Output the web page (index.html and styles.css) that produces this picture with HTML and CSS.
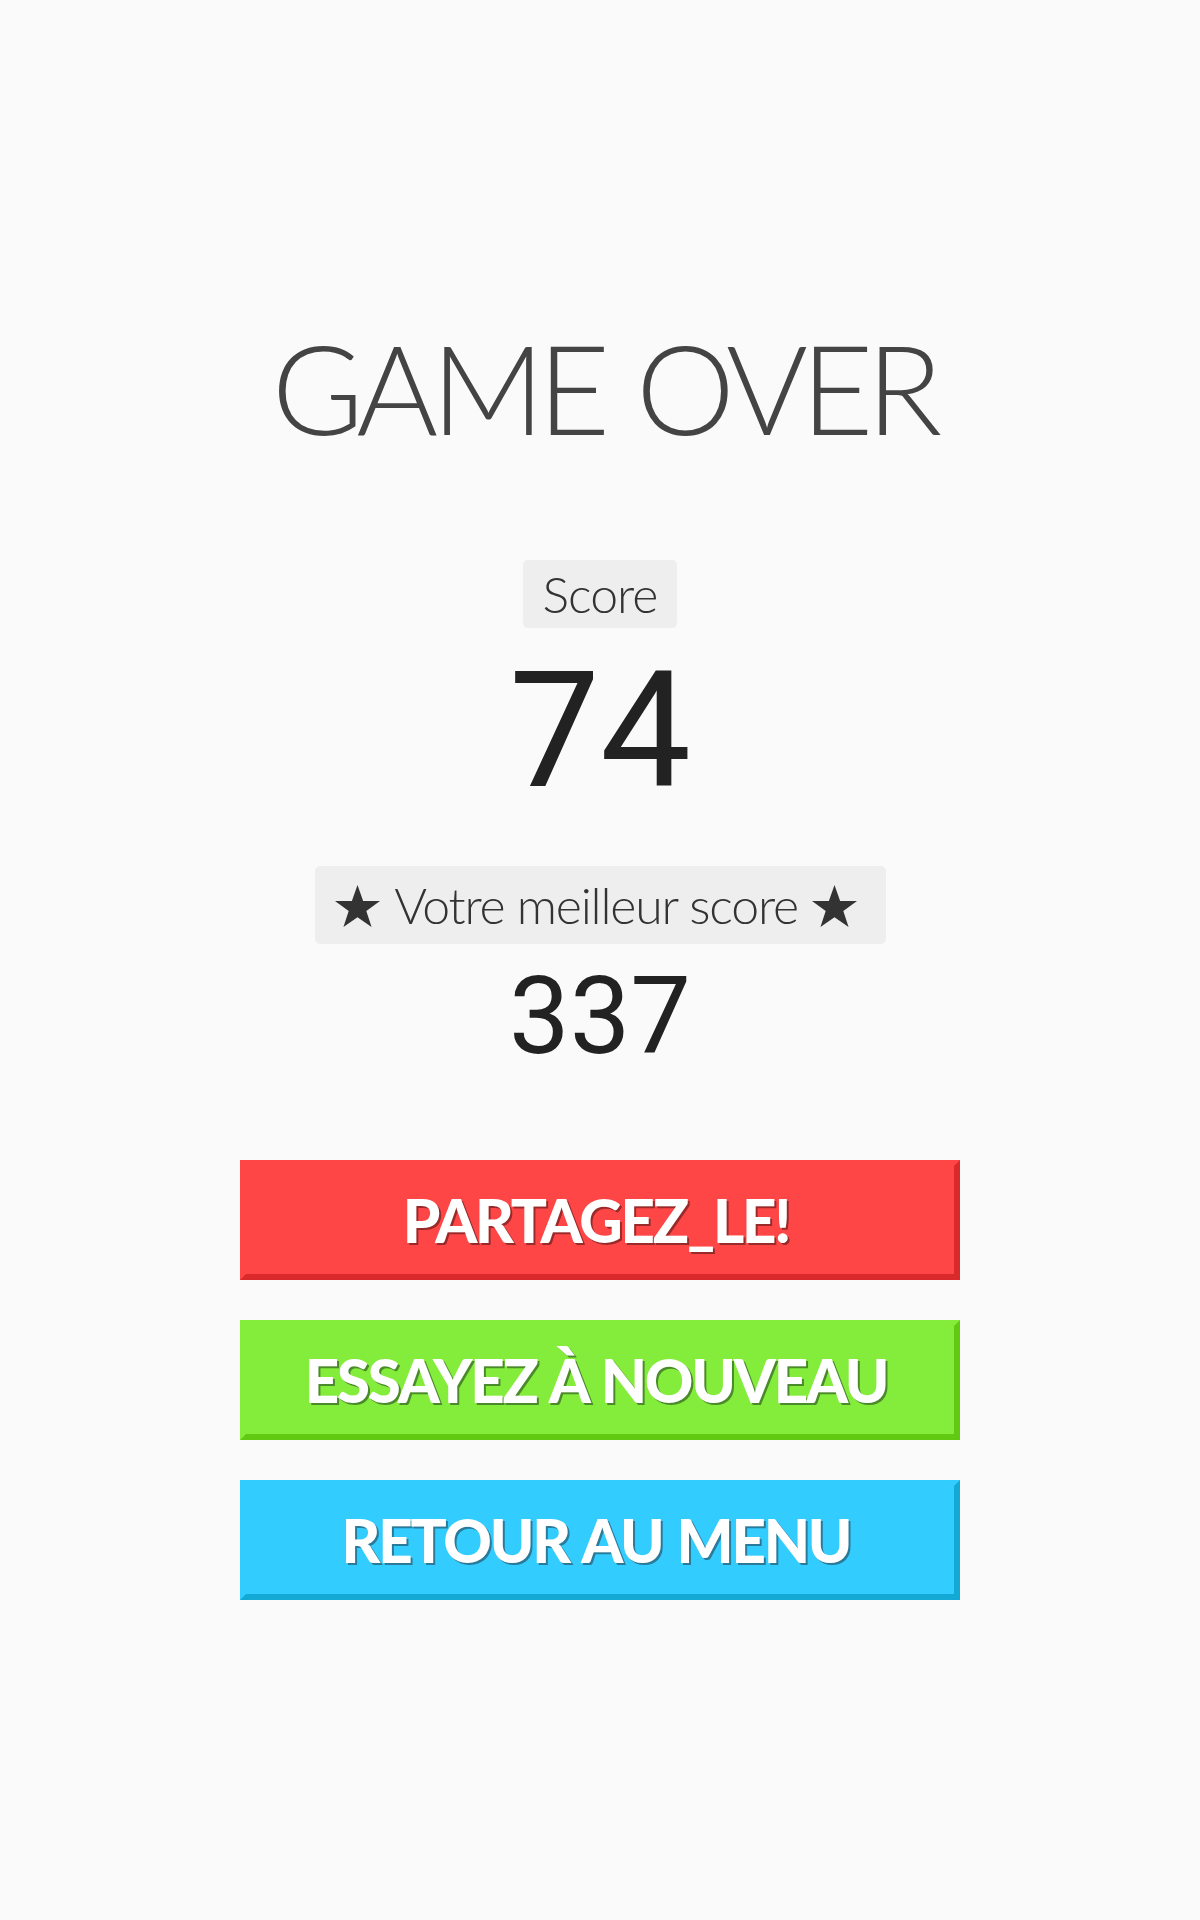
FILE: index.html
```html
<!DOCTYPE html>
<html lang="fr">
<head>
<meta charset="utf-8">
<title>Game Over</title>
<link rel="stylesheet" href="styles.css">
</head>
<body>
<main class="screen">
  <h1 class="title">GAME OVER</h1>
  <div class="chip chip-score">Score</div>
  <div class="score">74</div>
  <div class="chip chip-best">
    <svg class="star" viewBox="0 0 24 24" aria-hidden="true"><path d="M12 1l3 8.6h9l-7.3 5.3 2.8 8.6L12 18.2 4.5 23.5l2.8-8.6L0 9.6h9z"/></svg>
    <span class="best-label">Votre meilleur score</span>
    <svg class="star" viewBox="0 0 24 24" aria-hidden="true"><path d="M12 1l3 8.6h9l-7.3 5.3 2.8 8.6L12 18.2 4.5 23.5l2.8-8.6L0 9.6h9z"/></svg>
  </div>
  <div class="best">337</div>
  <div class="buttons">
    <button class="btn btn-red">PARTAGEZ_LE!</button>
    <button class="btn btn-green">ESSAYEZ À NOUVEAU</button>
    <button class="btn btn-blue">RETOUR AU MENU</button>
  </div>
</main>
</body>
</html>
```
FILE: styles.css
```css
html, body {
  margin: 0;
  padding: 0;
  background: #fafafa;
}
body {
  width: 1200px;
  min-height: 1920px;
  font-family: "Lato", "DejaVu Sans", sans-serif;
}
.screen {
  display: flex;
  flex-direction: column;
  align-items: center;
  padding-top: 325px;
}
.title {
  margin: 0;
  padding-left: 7px;
  font-family: "Lato", sans-serif;
  font-weight: 300;
  font-size: 125px;
  line-height: 125px;
  height: 125px;
  color: #444444;
  letter-spacing: -7px;
  word-spacing: 6px;
  white-space: nowrap;
}
.chip {
  background: #eeeeee;
  border-radius: 5px;
  display: flex;
  align-items: center;
  justify-content: center;
  color: #333333;
  font-family: "Lato", sans-serif;
  font-weight: 300;
}
.chip-score {
  margin-top: 110px;
  width: 154px;
  height: 68px;
  font-size: 50px;
  line-height: 1;
  letter-spacing: -1px;
}
.score {
  margin-top: 22px;
  font-family: "Roboto", sans-serif;
  font-size: 162px;
  line-height: 162px;
  height: 162px;
  color: #222222;
}
.chip-best {
  margin-top: 54px;
  width: 571px;
  height: 78px;
  box-sizing: border-box;
  padding-right: 8px;
  gap: 14px;
  font-size: 50px;
  line-height: 1;
  letter-spacing: -1.2px;
}
.star {
  width: 45px;
  height: 45px;
  fill: #333333;
  flex: none;
}
.best {
  margin-top: 18px;
  font-family: "Roboto", sans-serif;
  font-size: 108px;
  line-height: 108px;
  height: 108px;
  color: #222222;
}
.buttons {
  margin-top: 90px;
  display: flex;
  flex-direction: column;
  gap: 40px;
}
.btn {
  width: 720px;
  height: 120px;
  margin: 0;
  padding: 0 8px 0 0;
  border: 6px solid;
  font-family: "Lato", sans-serif;
  font-weight: 900;
  font-size: 60px;
  line-height: 1;
  letter-spacing: -2.2px;
  word-spacing: 2px;
  color: #ffffff;
  cursor: pointer;
  display: flex;
  align-items: center;
  justify-content: center;
}
.btn-red {
  background: #ff4646;
  border-color: #ff4646 #d9292b #d9292b #ff4646;
  text-shadow: 2px 2px 0 #9a2a2a;
}
.btn-green {
  background: #84ec3a;
  border-color: #84ec3a #62c912 #62c912 #84ec3a;
  text-shadow: 2px 2px 0 #4a8a2a;
}
.btn-blue {
  background: #33ccff;
  border-color: #33ccff #14a8d4 #14a8d4 #33ccff;
  text-shadow: 2px 2px 0 #2a7a9a;
}
```
